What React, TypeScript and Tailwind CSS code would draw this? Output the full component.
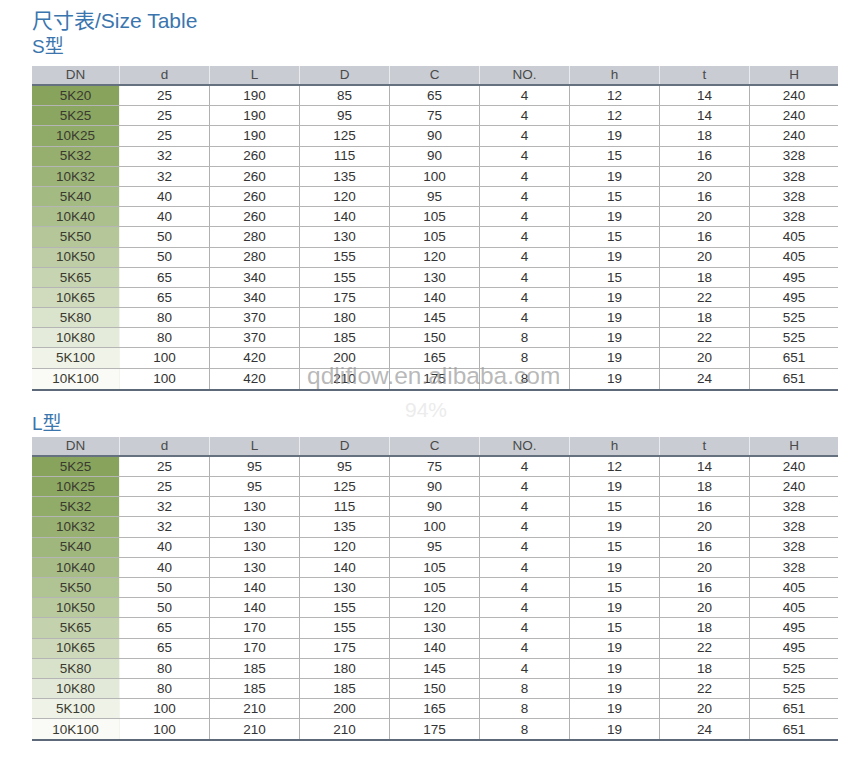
import React from "react";

const cols = ["DN", "d", "L", "D", "C", "NO.", "h", "t", "H"];
const widths = ["w-[88px]", "w-[90px]", "w-[90px]", "w-[90px]", "w-[90px]", "w-[90px]", "w-[90px]", "w-[90px]", "w-[88px]"];

const sRows = [
  ["5K20", 25, 190, 85, 65, 4, 12, 14, 240],
  ["5K25", 25, 190, 95, 75, 4, 12, 14, 240],
  ["10K25", 25, 190, 125, 90, 4, 19, 18, 240],
  ["5K32", 32, 260, 115, 90, 4, 15, 16, 328],
  ["10K32", 32, 260, 135, 100, 4, 19, 20, 328],
  ["5K40", 40, 260, 120, 95, 4, 15, 16, 328],
  ["10K40", 40, 260, 140, 105, 4, 19, 20, 328],
  ["5K50", 50, 280, 130, 105, 4, 15, 16, 405],
  ["10K50", 50, 280, 155, 120, 4, 19, 20, 405],
  ["5K65", 65, 340, 155, 130, 4, 15, 18, 495],
  ["10K65", 65, 340, 175, 140, 4, 19, 22, 495],
  ["5K80", 80, 370, 180, 145, 4, 19, 18, 525],
  ["10K80", 80, 370, 185, 150, 8, 19, 22, 525],
  ["5K100", 100, 420, 200, 165, 8, 19, 20, 651],
  ["10K100", 100, 420, 210, 175, 8, 19, 24, 651],
];

const lRows = [
  ["5K25", 25, 95, 95, 75, 4, 12, 14, 240],
  ["10K25", 25, 95, 125, 90, 4, 19, 18, 240],
  ["5K32", 32, 130, 115, 90, 4, 15, 16, 328],
  ["10K32", 32, 130, 135, 100, 4, 19, 20, 328],
  ["5K40", 40, 130, 120, 95, 4, 15, 16, 328],
  ["10K40", 40, 130, 140, 105, 4, 19, 20, 328],
  ["5K50", 50, 140, 130, 105, 4, 15, 16, 405],
  ["10K50", 50, 140, 155, 120, 4, 19, 20, 405],
  ["5K65", 65, 170, 155, 130, 4, 15, 18, 495],
  ["10K65", 65, 170, 175, 140, 4, 19, 22, 495],
  ["5K80", 80, 185, 180, 145, 4, 19, 18, 525],
  ["10K80", 80, 185, 185, 150, 8, 19, 22, 525],
  ["5K100", 100, 210, 200, 165, 8, 19, 20, 651],
  ["10K100", 100, 210, 210, 175, 8, 19, 24, 651],
];

// green fades toward white going down the DN column
function dnColor(i: number, n: number) {
  const t = Math.pow(i / (n - 1), 1.35);
  const from = [136, 164, 92];
  const to = [250, 251, 247];
  const c = from.map((f, k) => Math.round(f + (to[k] - f) * t));
  return `rgb(${c[0]},${c[1]},${c[2]})`;
}

function SizeTable({ rows }: { rows: (string | number)[][] }) {
  return (
    <div className="w-[806px] border-b-2 border-[#5d6878]">
      <div className="flex h-[20px] bg-[#c9cdd3] border-b-2 border-[#66717f] text-[#4a4a4a]">
        {cols.map((c, i) => (
          <div
            key={c}
            className={`${widths[i]} flex items-center justify-center ${i < cols.length - 1 ? "border-r border-[#e9ebee]" : ""}`}
          >
            {c}
          </div>
        ))}
      </div>
      {rows.map((r, ri) => (
        <div key={String(r[0])} className={`flex h-[20.2px] ${ri < rows.length - 1 ? "border-b border-[#b5b5b5]" : ""}`}>
          {r.map((v, i) => (
            <div
              key={i}
              className={`${widths[i]} flex items-center justify-center ${
                i === 0 ? "border-r border-[#f2f5ec] text-[#3a3a30]" : i < r.length - 1 ? "border-r border-[#b0b0b0]" : ""
              }`}
              style={i === 0 ? { backgroundColor: dnColor(ri, rows.length) } : undefined}
            >
              {v}
            </div>
          ))}
        </div>
      ))}
    </div>
  );
}

export default function App() {
  return (
    <div
      className="relative w-[867px] h-[758px] bg-white pl-[32px] pt-[8px] text-[13.5px] text-[#333] leading-none"
      style={{ fontFamily: '"Liberation Sans", Arial, "Noto Sans CJK SC", sans-serif' }}
    >
      <h1 className="text-[21px] text-[#3b75ae] leading-[26px]">尺寸表/Size Table</h1>
      <h2 className="text-[19px] text-[#3b75ae] leading-[26px] mb-[6px]">S型</h2>
      <SizeTable rows={sRows} />

      <h2 className="text-[19px] text-[#3b75ae] leading-[26px] mt-[20px] mb-0">L型</h2>
      <SizeTable rows={lRows} />

      <div className="absolute left-[307px] top-[364px] text-[24.5px] font-light text-[#9a9a9a]/70 leading-none">
        qdliflow.en.alibaba.com
      </div>
      <div className="absolute left-[405px] top-[399px] text-[21px] text-[#ececec] leading-none">94%</div>
    </div>
  );
}
